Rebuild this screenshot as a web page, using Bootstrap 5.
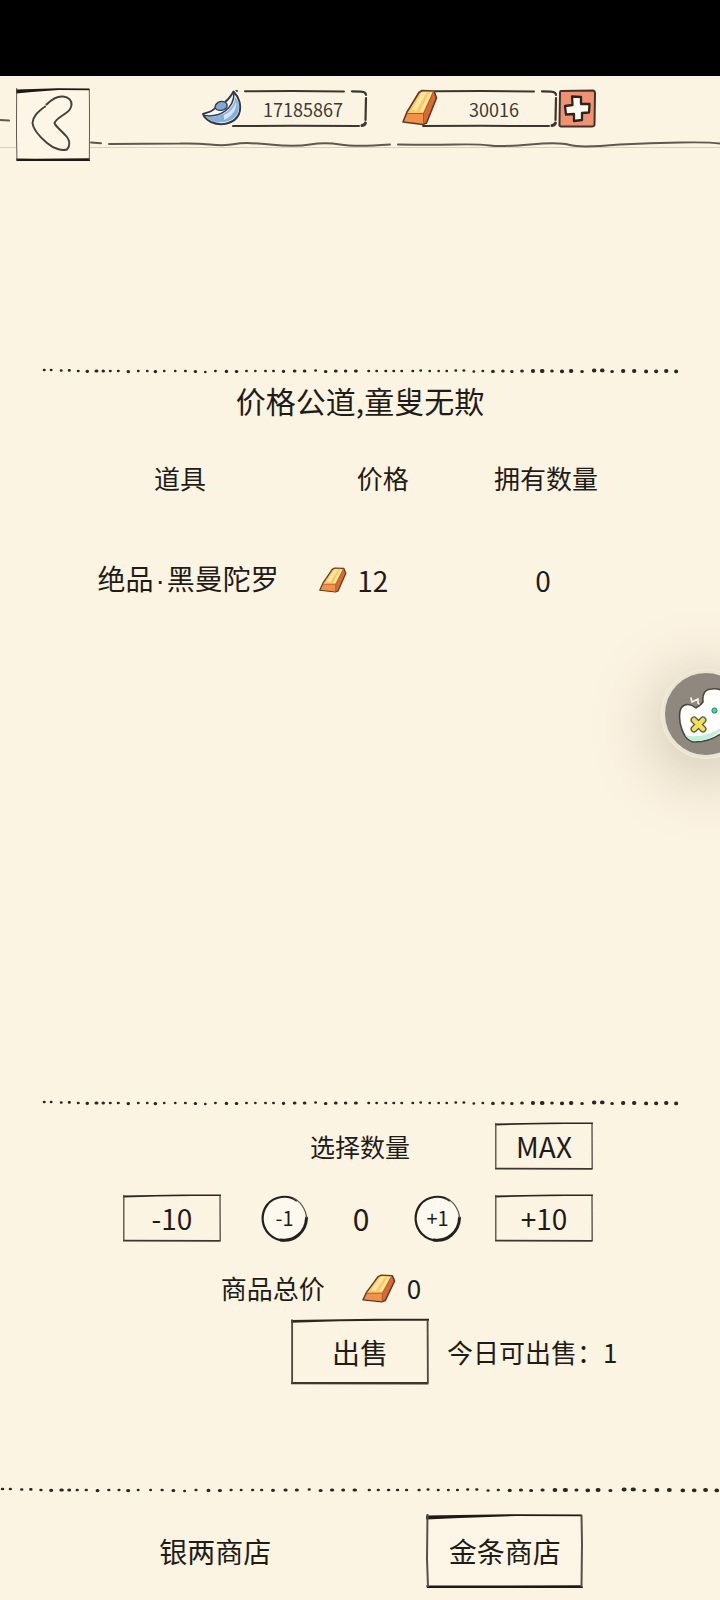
<!DOCTYPE html>
<html lang="zh-CN">
<head>
<meta charset="utf-8">
<meta name="viewport" content="width=device-width, initial-scale=1">
<title>金条商店</title>
<link rel="stylesheet" href="https://cdn.jsdelivr.net/npm/bootstrap@5.3.0/dist/css/bootstrap.min.css">
<style>
  body { background: #fcf4e2; color: #1f1c17; font-family: "Noto Sans CJK SC", sans-serif; font-size: 26px; line-height: 36px; overflow-x: hidden; }
  button, .tab-link { background: none; border: 0; padding: 0; color: inherit; font-size: 28px; line-height: 36px; text-decoration: none; }
  svg { display: block; }
  .status-strip { height: 76px; background: #000; }
  .top-bar { height: 88px; padding: 12px 16px; }
  .sketch-fill { position: absolute; inset: 0; width: 100%; height: 100%; pointer-events: none; }
  .back-btn { width: 74px; height: 73px; }
  .wallet { margin-left: 112px; gap: 34px; padding-top: 1px; }
  .purse { height: 38px; font-size: 18px; line-height: 40px; color: #3d3a33; }
  .purse-silver { width: 166px; padding-left: 36px; }
  .purse-gold { width: 156px; padding-left: 28px; }
  .dots { height: 8px; width: 100%; }
  .dots-inset { padding: 0 41px 0 42px; }
  .goods { margin-top: 203px; }
  .goods-title { font-size: 30px; line-height: 40px; margin: 5px 0 0; font-weight: 400; }
  .goods-table { table-layout: fixed; width: 84%; margin: 40px 0 0 41px; }
  .goods-table th { font-weight: 400; padding: 0; height: 36px; }
  .goods-table td { font-size: 28px; padding: 64px 0 0; height: 36px; }
  .goods-table td:first-child { padding-left: 16px; }
  .goods-table td:last-child { padding-right: 6px; }
  .mid-dot { font-family: "Liberation Sans", sans-serif; margin: 0 2px; }
  .price { gap: 10px; }
  .col-name { width: 46%; }
  .col-price { width: 21%; }
  .picker { width: 474px; max-width: 100%; margin: 15px auto 0; padding-right: 4px; }
  .picker-head { display: grid; grid-template-columns: 98px 1fr 98px; align-items: center; }
  .picker-head label { font-size: 25px; grid-column: 2; text-align: center; padding-left: 4px; }
  .box-btn { width: 98px; height: 48px; }
  .round-btn { width: 47px; height: 47px; font-size: 20px; }
  .steps { width: 206px; padding-left: 6px; font-size: 30px; }
  .total { gap: 11px; padding-right: 78px; margin-top: 28px; }
  .total-label { margin-right: 26px; }
  .sell-row { display: grid; grid-template-columns: 1fr 138px 1fr; gap: 18px; align-items: center; margin-top: 12px; }
  .sell-btn { grid-column: 2; height: 67px; }
  .shop-foot { padding-top: 101px; }
  .tabs { padding: 20px 19% 12px; }
  .tab-link { width: 157px; height: 74px; }
  .helper-clip { position: absolute; inset: 0; overflow: hidden; pointer-events: none; }
  .helper { position: absolute; top: 673px; right: -27px; width: 82px; height: 82px; border-radius: 50%; background: #8f887e; pointer-events: auto; box-shadow: 0 0 0 3px #ece4d3, 0 0 0 4px #f4ecdb, 0 12px 60px 16px rgba(120, 108, 80, .27); }
</style>
</head>
<body class="position-relative d-flex flex-column min-vh-100">

<svg width="0" height="0" class="position-absolute" aria-hidden="true">
  <symbol id="dot-line" viewBox="-2 0 636 8" preserveAspectRatio="none">
    <g fill="none" stroke="#2b2821" stroke-linecap="round">
      <path stroke-width="2.600" d="M0 3h.5M7 3h.3M17 3.500h.4M25 3.400h.5M34 4h.4M66 4h.4M74 4h.4M94 4h.3M103 4h.2M120 4h.1M131 4h.1M141 4h.4M161 5h.1M171 4h.3M202 4h.3M211 4h.1M221 4h.3M229 4h.3M271 3.500h.3M324 4h.4M332 4h.3M341 4h.5M349 4h.4M357 4h.3M368 4h.4M376 3.500h.2M385 4h.2M394 4h.1M402 4h.2M411 3.500h.3M419 3.500h.4M429 4.500h.3M438 4h.3"/>
      <path stroke-width="3.200" d="M43 4.300h.4M52 4h.8M59 4h.3M84 4.600h.3M111 4.600h.4M151 4.500h.3M182 4.400h.3M192 4.500h.5M239 4.300h.3M250 4h.5M260 4h.4M281 4.500h.4M291 4h.6M301 4h.3M311 4h.8M448 4.400h.5M458 4h.4M467 4.500h.3M477 4h.5M507 4h.4M537 4.500h.4M567 4.500h.4"/>
      <path stroke-width="3.800" d="M488 4h.4M497 4h.8M517 4.300h.4M526 4h.6M549 3.500h.6M557 3.400h.8M578 4h.5M589 4h.5M601 4.400h.3M611 4.300h.4M621 4h.5M631 4.400h.3"/>
    </g>
  </symbol>
  <symbol id="thin-box" viewBox="0 0 98 48" preserveAspectRatio="none">
    <path fill="#2a2721" d="M0 1.400L60 .6 98 .5V2H70L34 2.400 0 3.400z"/>
    <path fill="#3b372f" d="M0 45.800L97.500 45.900V47.700L0 47.400z"/>
    <path fill="none" stroke="#4d493f" stroke-width="1.300" d="M.8 1V47M97 1.500L97.200 47"/>
  </symbol>
  <symbol id="bold-box" viewBox="0 0 157 74" preserveAspectRatio="none">
    <path fill="#fdf6e6" d="M1 3L155 2V72H1z"/>
    <path fill="#1d1a15" d="M0 1.500L90 .2 156 .5V2.200L90 2 34 4 0 5.500z"/>
    <path fill="#1d1a15" d="M0 71.500L40 71.600 156 71.200 157 74H1z"/>
    <path fill="none" stroke="#55514a" stroke-width="2" d="M1.500 0L1 45 2 73M155.500 1L156 30 155.500 73"/>
  </symbol>
  <symbol id="gold-bar" viewBox="0 0 36 37">
    <path fill="#ef9a3c" d="M1 33L16 3 19 1.500 32 2 34.500 9 24.500 34.500 20 35z"/>
    <path fill="#fdc768" d="M5 24.500L18.500 2 31.500 2.500 21.500 24.500z"/>
    <path fill="#fee7a0" d="M10 20L20 3.500 25 3 14 22zM18 22L27 4 30 4 21 23z"/>
    <path fill="#f0924a" d="M1 33L5 24.500 21.500 24.500 21 35z"/>
    <path fill="#d96a35" d="M21.500 24.500L31.500 2.500 34.500 9 24.500 34.500 21 35z"/>
    <path fill="none" stroke="#5e3a24" stroke-width="1.600" stroke-linejoin="round" d="M1 33L5 23 17 3.500 20 1.500 32 2 34.500 9 24.500 34 21 35.500z"/>
    <path fill="none" stroke="#a9582b" stroke-width="1" d="M5 24.500H21.500L31.500 2.500M21.500 24.500V35"/>
  </symbol>
  <symbol id="purse-frame" viewBox="0 0 136 38" preserveAspectRatio="none">
    <g fill="none" stroke="#3a372f" stroke-linecap="round">
      <path stroke-width="2" d="M1 2.500L5 2M13 2.300L60 2 112 2.600"/>
      <path stroke-width="2.200" d="M120 2.300L129 2.600Q134 3 134 6M134 9L133.500 31"/>
      <path stroke-width="2" d="M1 37L60 36.800 127 37"/>
      <path stroke-width="3" d="M130 36.500Q133 36 133.400 34"/>
    </g>
  </symbol>
</svg>

<div class="status-strip flex-shrink-0"></div>

<header class="top-bar position-relative d-flex align-items-start flex-shrink-0">
  <svg class="sketch-fill" viewBox="0 0 720 88" preserveAspectRatio="none" aria-hidden="true">
    <path fill="none" stroke="#d8d2c2" stroke-width="1" d="M0 71.500H720"/>
    <path fill="none" stroke="#5d594f" stroke-width="2" stroke-linecap="round" d="M0 44L9 44.600M91 66.500L101 67.200M109 68L180 67.500Q195 67 210 68.500T235 68 270 68.500 310 68.500 340 68.500 390 68.500M398 68.500Q430 69 455 68.500T490 69.500 530 68.500 570 69 620 68.500Q650 67 680 66.500T720 67.500"/>
  </svg>
  <button type="button" class="back-btn position-relative" aria-label="返回">
    <svg class="sketch-fill" aria-hidden="true"><use href="#bold-box"/></svg>
    <svg class="sketch-fill" viewBox="0 0 74 73" aria-hidden="true">
      <path fill="none" stroke="#45423b" stroke-width="2" stroke-linecap="round" d="M30.500 16.500C36 11 42 8 47 8.500C53 9 56 13 55.500 17C55 21 53 23 50 25C46 28 40 31 38.500 35C39 38 47 44 51 49C54 53 54 58 51 61.500C46 63 38 61 31 55C24 49 17 42 16.500 35C17 28 22 24 27 20M28.500 19L29 18.500"/>
    </svg>
  </button>
  <div class="wallet d-flex position-relative">
    <div class="purse purse-silver position-relative text-center">
      <svg class="position-absolute top-0 end-0" width="136" height="38" aria-hidden="true"><use href="#purse-frame"/></svg>
      <svg class="position-absolute top-0 start-0" width="40" height="38" viewBox="0 0 40 38" aria-hidden="true">
        <path fill="none" stroke="#fffdf6" stroke-width="4" stroke-linejoin="round" d="M31.500 2.500C37 8 40 17 37 25C33 34 20 38 9 33C5 31 2 28 1 25C6 23 10 23 13 20C20 16 28 14 31.500 2.500z"/>
        <path fill="#f4f6f7" d="M31.500 2.500C37 8 40 17 37 25C33 34 20 38 9 33C5 31 2 28 1 25C6 23 10 23 13 20C20 16 28 14 31.500 2.500z"/>
        <path fill="#86b0dc" d="M33 8C38 14 38 22 34 27C28 34 16 35 8 31L4 28C18 29 32 22 33 8z"/>
        <path fill="#d3e4f4" d="M22 26C29 23 33 17 34 12C36 19 30 28 22 31z"/>
        <path fill="#7fa9d8" stroke="#383f47" stroke-width="1.300" d="M13 19C13 14 18 11 23 13C26 15 26 18 23 20C20 22 15 22 13 19z"/>
        <path fill="none" stroke="#333a42" stroke-width="2" stroke-linejoin="round" d="M23 13C27 10 29 7 31.500 2.500C37 8 40 17 37 25C33 34 20 38 9 33C5 31 2 28 1 25C6 23 10 23 13 19"/>
        <path fill="none" stroke="#333a42" stroke-width="1.500" d="M2 26.500C18 29 32 20 32 4"/>
      </svg>
      <span class="position-relative">17185867</span>
    </div>
    <div class="d-flex">
      <div class="purse purse-gold position-relative text-center">
        <svg class="position-absolute top-0 end-0" width="136" height="38" aria-hidden="true"><use href="#purse-frame"/></svg>
        <svg class="position-absolute top-0 start-0" width="36" height="37" aria-hidden="true"><use href="#gold-bar"/></svg>
        <span class="position-relative">30016</span>
      </div>
      <button type="button" aria-label="购买金条">
        <svg width="38" height="39" viewBox="0 0 38 39" aria-hidden="true">
          <path fill="#ee9272" stroke="#463029" stroke-width="2" stroke-linejoin="round" d="M3 2L35 1.500Q37 2 37 4L36.500 36Q36 37.500 34 37.500L3 37.500Q1 37 1.500 35L2 4Q2 2 3 2z"/>
          <path fill="#fffaf0" stroke="#2c2420" stroke-width="2.300" stroke-linejoin="round" d="M14 7.500L23 8 23 15 31.500 15 31 23.500 24 24 24 31 16 32 16 25 8 25.500 7 17 14.500 16z"/>
        </svg>
      </button>
    </div>
  </div>
</header>

<main class="flex-grow-1 d-flex flex-column">
  <section class="goods flex-grow-1">
    <div class="dots-inset"><svg class="dots" aria-hidden="true"><use href="#dot-line"/></svg></div>
    <h1 class="goods-title text-center">价格公道,童叟无欺</h1>
    <table class="goods-table text-center">
      <colgroup><col class="col-name"><col class="col-price"><col></colgroup>
      <thead><tr><th scope="col">道具</th><th scope="col">价格</th><th scope="col">拥有数量</th></tr></thead>
      <tbody>
        <tr>
          <td>绝品<span class="mid-dot">·</span>黑曼陀罗</td>
          <td><span class="price d-flex align-items-center"><svg width="28" height="26" viewBox="0 0 36 37" preserveAspectRatio="none" aria-hidden="true"><use href="#gold-bar" width="36" height="37"/></svg>12</span></td>
          <td>0</td>
        </tr>
      </tbody>
    </table>
  </section>

  <section>
    <div class="dots-inset"><svg class="dots" aria-hidden="true"><use href="#dot-line"/></svg></div>
    <div class="picker">
      <div class="picker-head">
        <label for="amount">选择数量</label>
        <button type="button" class="box-btn position-relative"><svg class="sketch-fill" aria-hidden="true"><use href="#thin-box"/></svg>MAX</button>
      </div>
      <div class="d-flex align-items-center justify-content-between mt-4">
        <button type="button" class="box-btn position-relative"><svg class="sketch-fill" aria-hidden="true"><use href="#thin-box"/></svg>-10</button>
        <div class="steps d-flex align-items-center justify-content-between">
          <button type="button" class="round-btn position-relative">
            <svg class="sketch-fill" viewBox="0 0 47 47" aria-hidden="true"><circle cx="23.500" cy="23.500" r="21.500" fill="#fef9ee"/><path fill="none" stroke="#24211c" stroke-width="2.200" d="M36 6C27-1 13 1 6 10C-1 20 1 32 8 39C12 43 18 45.500 24 45.500"/><path fill="none" stroke="#24211c" stroke-width="3" stroke-linecap="round" d="M20 45C33 47 45 37 45.500 23"/><path fill="none" stroke="#5a564c" stroke-width="1.300" d="M32 3C39 6 45 14 45.500 23"/></svg>
            <span class="position-relative">-1</span>
          </button>
          <output id="amount">0</output>
          <button type="button" class="round-btn position-relative">
            <svg class="sketch-fill" viewBox="0 0 47 47" aria-hidden="true"><circle cx="23.500" cy="23.500" r="21.500" fill="#fef9ee"/><path fill="none" stroke="#24211c" stroke-width="2.200" d="M36 6C27-1 13 1 6 10C-1 20 1 32 8 39C12 43 18 45.500 24 45.500"/><path fill="none" stroke="#24211c" stroke-width="3" stroke-linecap="round" d="M20 45C33 47 45 37 45.500 23"/><path fill="none" stroke="#5a564c" stroke-width="1.300" d="M32 3C39 6 45 14 45.500 23"/></svg>
            <span class="position-relative">+1</span>
          </button>
        </div>
        <button type="button" class="box-btn position-relative"><svg class="sketch-fill" aria-hidden="true"><use href="#thin-box"/></svg>+10</button>
      </div>
    </div>
    <div class="total d-flex align-items-center justify-content-center">
      <span class="total-label">商品总价</span>
      <svg width="34" height="29" viewBox="0 0 36 37" preserveAspectRatio="none" aria-hidden="true"><use href="#gold-bar" width="36" height="37"/></svg>
      <span>0</span>
    </div>
    <div class="sell-row">
      <button type="button" class="sell-btn position-relative"><svg class="sketch-fill" aria-hidden="true"><use href="#thin-box"/></svg>出售</button>
      <span>今日可出售：1</span>
    </div>
  </section>
</main>

<footer class="shop-foot">
  <svg class="dots" aria-hidden="true"><use href="#dot-line"/></svg>
  <nav class="tabs d-flex justify-content-between" aria-label="商店">
    <a href="#silver" class="tab-link d-flex align-items-center justify-content-center">银两商店</a>
    <a href="#gold" class="tab-link position-relative d-flex align-items-center justify-content-center" aria-current="page"><svg class="sketch-fill" aria-hidden="true"><use href="#bold-box"/></svg><span class="position-relative">金条商店</span></a>
  </nav>
</footer>

<div class="helper-clip">
  <button type="button" class="helper" aria-label="游戏助手">
    <svg width="82" height="82" viewBox="0 0 82 82" aria-hidden="true">
      <path fill="#fffefb" stroke="#4b4740" stroke-width="1.600" d="M31 35C33 33 36 32 38 29C37 21 40 16 47 16C52 15 57 17 61 20C72 24 77 34 73 42C66 56 48 70 28 69C18 66 13 50 15 38C17 30 25 30 31 35z"/>
      <path fill="#bff0dc" d="M20 62C33 66 50 60 62 51C52 63 40 69 28 68C24 67 22 65 20 62z"/>
      <path fill="none" stroke="#f6f3ec" stroke-width="1.700" stroke-linejoin="round" stroke-linecap="round" d="M26 25L27 29 33 26 33 30 34 31"/>
      <g stroke-linecap="round"><path stroke="#5f5a3e" stroke-width="7" d="M29 47L38 56M38 47L29 56"/><path stroke="#f3e05a" stroke-width="4.500" d="M29 47L38 56M38 47L29 56"/></g>
      <circle cx="49.500" cy="37.500" r="2.600" fill="#45d3a0" stroke="#2e7f64" stroke-width="1"/>
      <circle cx="57" cy="38" r="2" fill="#7c8bd8"/>
    </svg>
  </button>
</div>

<script src="https://cdn.jsdelivr.net/npm/bootstrap@5.3.0/dist/js/bootstrap.bundle.min.js"></script>
</body>
</html>
